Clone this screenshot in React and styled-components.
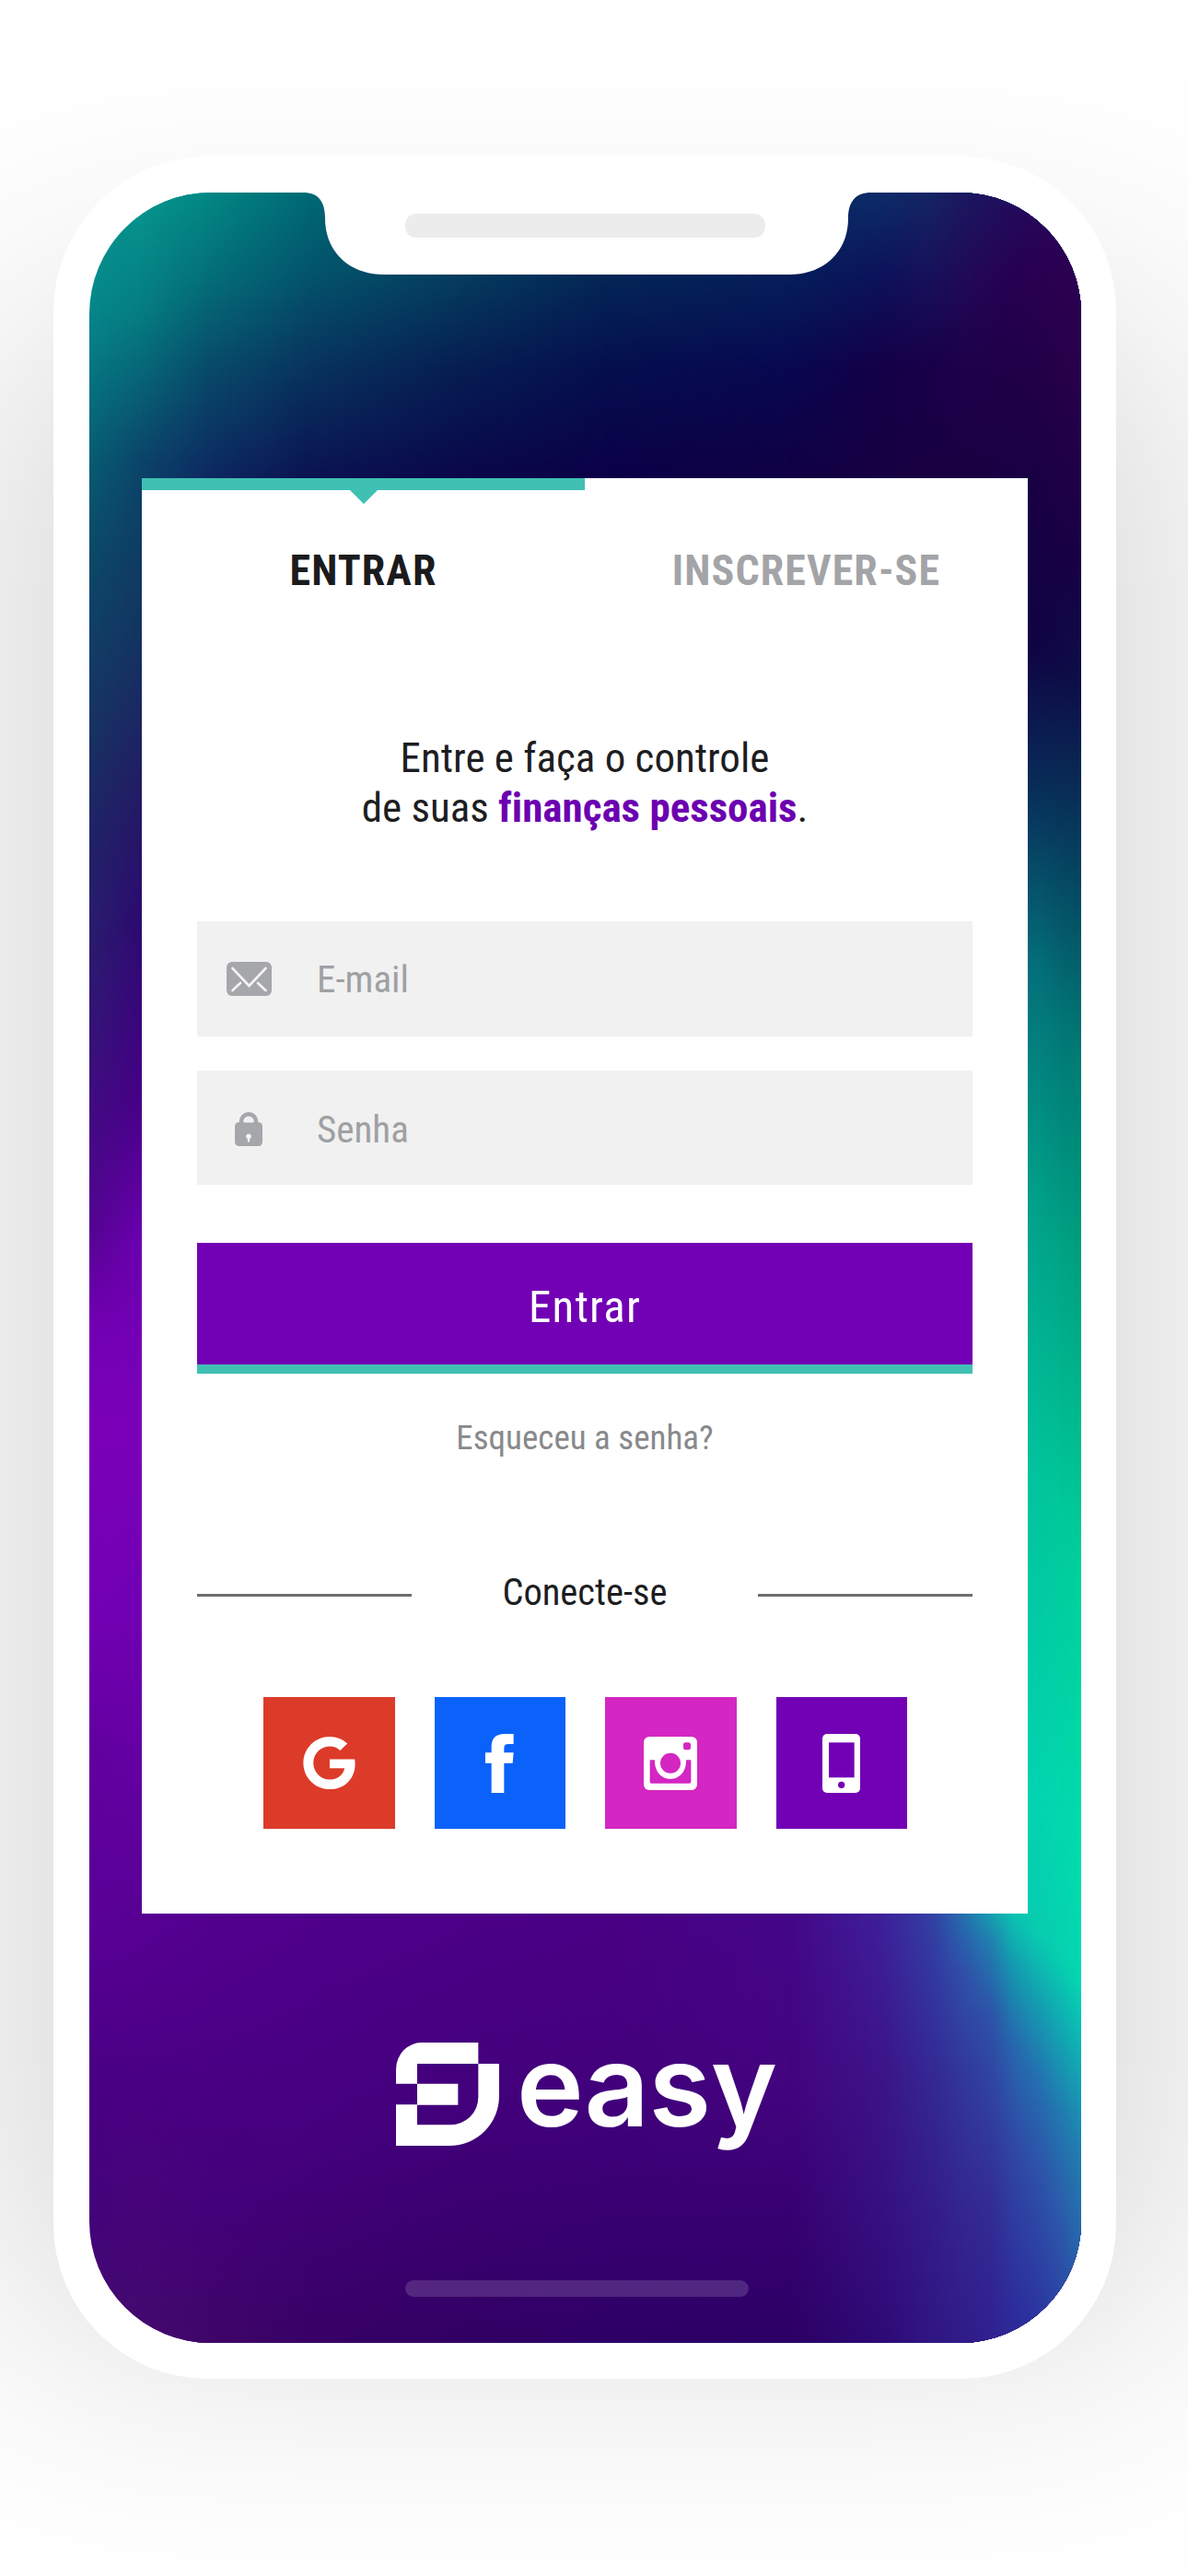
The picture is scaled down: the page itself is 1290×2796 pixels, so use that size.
import React from 'react';
import styled, { createGlobalStyle } from 'styled-components';
import { FaGoogle } from 'react-icons/fa';

const GlobalStyle = createGlobalStyle`
  * { box-sizing: border-box; }
  body { margin: 0; background: #fff; }
`;

const TEAL = '#3fc0b3';
const PURPLE = '#7200b4';

/* Vertical colour ramps of the backdrop: x, then [y, colour] stops, in screen pixels. */
const RAMPS = [
  [0, [[0, '#07968f'], [130, '#05878a'], [291, '#085c73'], [391, '#0b4a68'], [591, '#183262'], [691, '#202466'], [841, '#2d1a70'], [991, '#400c80'], [1120, '#520490'], [1230, '#7200b2'], [1341, '#7a00b8'], [1541, '#7300b4'], [1691, '#62009e'], [1868, '#5a0098'], [2041, '#4a0084'], [2191, '#43047a'], [2334, '#430a6e']]],
  [57, [[0, '#079690'], [130, '#057c80'], [291, '#0b4469'], [491, '#143261'], [641, '#221c64'], [791, '#2c0a70'], [991, '#470088'], [1141, '#6c00b0'], [1341, '#7a00b8'], [1541, '#7000b2'], [1868, '#580094'], [2041, '#4a0084'], [2334, '#430a6e']]],
  [125, [[0, '#038985'], [91, '#047079'], [191, '#084c6a'], [310, '#0d2a62'], [1868, '#530090'], [2041, '#4a0083'], [2191, '#43027a'], [2334, '#400668']]],
  [235, [[0, '#006a75'], [91, '#03546c'], [191, '#08345e'], [310, '#0b1352'], [1868, '#4f008c'], [2091, '#460080'], [2334, '#380266']]],
  [400, [[0, '#045068'], [91, '#053c5e'], [191, '#061e52'], [310, '#0a074a'], [1868, '#4c0088'], [2091, '#42007a'], [2334, '#320064']]],
  [560, [[0, '#053c60'], [91, '#042656'], [191, '#050f4e'], [310, '#0b0048'], [1868, '#4a0084'], [2091, '#40007a'], [2334, '#2e0066']]],
  [760, [[0, '#082c60'], [91, '#051e5a'], [191, '#080850'], [310, '#100044'], [1868, '#440688'], [2041, '#440480'], [2191, '#380072'], [2334, '#2c0064']]],
  [860, [[0, '#0c2c68'], [91, '#0c125a'], [191, '#140048'], [310, '#170042'], [1868, '#3e209a'], [2041, '#3c1488'], [2191, '#361080'], [2334, '#2e0a76']]],
  [915, [[0, '#162464'], [91, '#18105a'], [191, '#190049'], [310, '#190042'], [1868, '#3240a4'], [2041, '#342894'], [2191, '#341c8a'], [2334, '#301682']]],
  [950, [[0, '#1b1860'], [91, '#200a57'], [191, '#1e004a'], [310, '#1a0042'], [1800, '#18a8b0'], [1868, '#2470b0'], [1930, '#3050a8'], [2041, '#32389c'], [2191, '#342690'], [2334, '#301c8a']]],
  [980, [[0, '#1e125e'], [91, '#250454'], [191, '#1f0049'], [310, '#1a0043'], [1741, '#04d0b0'], [1840, '#0cbcb0'], [1900, '#2080b0'], [1980, '#2e52a8'], [2091, '#323c9e'], [2191, '#332c94'], [2334, '#302090']]],
  [1005, [[0, '#220c5c'], [91, '#270052'], [191, '#200048'], [310, '#1a0044'], [491, '#120044'], [641, '#082a58'], [841, '#056c78'], [1091, '#009c8a'], [1391, '#02c09e'], [1741, '#04d0b0'], [1860, '#08ccb0'], [1925, '#149cb0'], [2010, '#2668ae'], [2121, '#3048a4'], [2334, '#2c289a']]],
  [1030, [[0, '#26085a'], [91, '#290052'], [191, '#220049'], [310, '#1a0044'], [491, '#100444'], [641, '#082c58'], [841, '#04707a'], [1091, '#00a088'], [1391, '#01c49c'], [1741, '#03d4b0'], [1890, '#08ccb0'], [1960, '#14a0b0'], [2045, '#2470b0'], [2151, '#2e50a8'], [2334, '#2c309e']]],
  [1054, [[0, '#2c0459'], [91, '#2b0050'], [191, '#260049'], [391, '#180044'], [515, '#0e0a46'], [691, '#073a5c'], [891, '#027476'], [1141, '#00a284'], [1441, '#01ca9b'], [1771, '#02d8ae'], [1915, '#06d0b0'], [1995, '#12a6b2'], [2085, '#2278b0'], [2191, '#2c5aaa'], [2334, '#2b3ea2']]],
  [1077, [[0, '#300058'], [191, '#28004c'], [391, '#190044'], [541, '#0c1048'], [741, '#064460'], [941, '#007c74'], [1191, '#00a480'], [1491, '#00d09a'], [1791, '#02dcac'], [1941, '#04d8b0'], [2030, '#10acb4'], [2121, '#2180b0'], [2334, '#2a50a8']]],
];

const ramp = (stops) =>
  `linear-gradient(180deg, ${stops.map(([y, c]) => `${c} ${y}px`).join(', ')})`;

const Page = styled.main`
  width: 1290px;
  height: 2796px;
  overflow: hidden;
  padding: 170px 78px 0 58px;
  background: #fff;
  font-family: "Roboto Condensed", Roboto, "Liberation Sans", sans-serif;
  font-stretch: 75%;
  font-variant-ligatures: none;
`;

const Phone = styled.div`
  position: relative;
  width: 1154px;
  height: 2412px;
  padding: 39px 38px 39px 39px;
  &::before {
    content: '';
    position: absolute;
    inset: 180px -45px 59px;
    background: rgba(0, 0, 0, 0.165);
    filter: blur(150px);
  }
  &::after {
    content: '';
    position: absolute;
    inset: 0;
    border-radius: 168px;
    background: #fff;
  }
`;

const Screen = styled.div`
  position: relative;
  z-index: 1;
  height: 2334px;
  border-radius: 132px;
  overflow: hidden;
  display: flex;
  flex-direction: column;
  align-items: flex-start;
  padding: 310px 0 0 57px;
`;

const Ramp = styled.div`
  position: absolute;
  inset: 0;
  background: ${(p) => p.$fill};
  ${(p) => p.$to > 0 && `mask-image: linear-gradient(90deg, transparent ${p.$from}px, #000 ${p.$to}px);`}
`;

const Notch = styled.svg`
  position: absolute;
  top: -1px;
  left: 232px;
  width: 617px;
  height: 90px;
`;

const Speaker = styled.div`
  position: absolute;
  top: 23px;
  left: 343px;
  width: 391px;
  height: 26px;
  border-radius: 12px;
  background: #ececec;
`;

const Card = styled.section`
  position: relative;
  width: 962px;
  height: 1558px;
  background: #fff;
  display: flex;
  flex-direction: column;
`;

const Tabs = styled.nav`
  display: grid;
  grid-template-columns: 1fr 1fr;
`;

const Tab = styled.div`
  position: relative;
  border-top: 13px solid ${(p) => (p.$active ? TEAL : 'transparent')};
  padding-top: 57px;
  text-align: center;
  font-size: 46px;
  line-height: 60px;
  font-weight: 700;
  letter-spacing: 1.1px;
  color: ${(p) => (p.$active ? '#1b1b1d' : '#a3a4a7')};
  ${(p) => p.$active && `
    &::after {
      content: '';
      position: absolute;
      top: -1px;
      left: 50%;
      margin-left: -16px;
      border: 16px solid transparent;
      border-top-color: ${TEAL};
      border-bottom: 0;
    }
  `}
`;

const Form = styled.form`
  display: flex;
  flex-direction: column;
  padding: 0 60px;
`;

const Intro = styled.p`
  margin: 147px 0 97px;
  text-align: center;
  font-size: 45px;
  line-height: 53.5px;
  color: #1d1d1f;
`;

const Strong = styled.strong`
  font-weight: 700;
  color: #6c00b0;
`;

const Field = styled.label`
  display: flex;
  align-items: center;
  height: ${(p) => p.$height}px;
  margin-bottom: ${(p) => p.$gap}px;
  padding-top: ${(p) => p.$drop || 0}px;
  background: #f1f1f1;
  color: #9fa0a3;
  font-size: 41px;
`;

const FieldIcon = styled.span`
  width: 112px;
  margin-right: 18px;
  display: flex;
  justify-content: center;
`;

const Submit = styled.button`
  height: 142px;
  border: 0;
  border-bottom: 10px solid ${TEAL};
  padding: 6px 0 0;
  background: ${PURPLE};
  color: #fff;
  font: inherit;
  font-size: 49px;
  letter-spacing: 1.2px;
`;

const Forgot = styled.a`
  margin-top: 44.5px;
  text-align: center;
  font-size: 37px;
  line-height: 50px;
  color: #88898b;
`;

const Divider = styled.div`
  display: flex;
  align-items: center;
  justify-content: space-between;
  margin-top: 117.5px;
  font-size: 40.500px;
  line-height: 50px;
  font-weight: 450;
  color: #1d1d1f;
`;

const Rule = styled.span`
  width: 233px;
  height: 3px;
  margin-top: 7px;
  background: #6c6c6e;
`;

const Socials = styled.div`
  display: flex;
  justify-content: space-between;
  margin: 89px 71px 0 72px;
`;

const Tile = styled.button`
  width: 142.5px;
  height: 143px;
  border: 0;
  padding: 0;
  display: flex;
  align-items: center;
  justify-content: center;
  color: #fff;
  background: ${(p) => p.$color};
`;

const Brand = styled.div`
  position: relative;
  display: flex;
  align-items: flex-start;
  margin: 140px 0 0 276px;
  gap: 19px;
  color: #fff;
`;

const Wordmark = styled.span`
  margin-top: -3px;
  height: 100px;
  font-family: Inter, "DejaVu Sans", sans-serif;
  font-stretch: 100%;
  font-weight: 600;
  font-size: 123px;
  line-height: 100px;
  letter-spacing: -0.500px;
`;

const HomeBar = styled.div`
  position: absolute;
  bottom: 50px;
  left: 343px;
  width: 373px;
  height: 18px;
  border-radius: 9px;
  background: rgba(255, 255, 255, 0.15);
`;

const MailIcon = () => (
  <svg width="49" height="37" viewBox="0 0 49 37">
    <rect width="49" height="37" rx="6" fill="#a6a7aa" />
    <path d="M6.5 7 24.5 26 42.5 7M6.5 31l8.5-8M42.5 31l-8.5-8" fill="none" stroke="#f4f4f4" strokeWidth="2.6" strokeLinecap="round" />
  </svg>
);

const LockIcon = () => (
  <svg width="30" height="37" viewBox="0 0 30 37">
    <path d="M7 14V10a8 7.7 0 0 1 16 0V14" fill="none" stroke="#a6a7aa" strokeWidth="4.5" />
    <rect y="11" width="30" height="26" rx="4.5" fill="#a6a7aa" />
    <path d="M10.500 11.500V10a4.500 4.500 0 0 1 9 0v1.500z" fill="#f1f1f1" />
    <circle cx="15" cy="26.5" r="2.8" fill="#f4f4f4" />
    <path d="M15 27v5.500" stroke="#f4f4f4" strokeWidth="2.2" />
  </svg>
);

const FacebookIcon = () => (
  <svg width="31" height="64" viewBox="767 155 93 192" fill="currentColor">
    <path d="M787 347V250H767V216H787V197Q787 155 829 155H859V188H842Q828 188 828 201V216H859L856 250H828V347Z" />
  </svg>
);

const CameraIcon = () => (
  <svg width="58" height="58" viewBox="0 0 174 174">
    <rect width="174" height="174" rx="18" fill="currentColor" />
    <g fill="#d426c2">
      <rect x="129" y="19" width="24" height="24" rx="7" />
      <path d="M20 76H36C34 112 57 138 87 138S140 112 138 76H154V147Q154 152 149 152H25Q20 152 20 147Z" />
      <circle cx="87" cy="86" r="33" />
    </g>
  </svg>
);

const MobileIcon = () => (
  <svg width="41" height="64" viewBox="0 0 123 192">
    <rect width="123" height="192" rx="15" fill="currentColor" />
    <rect x="21" y="28" width="83" height="114" fill={PURPLE} />
    <circle cx="62" cy="166" r="11" fill={PURPLE} />
  </svg>
);

const BrandMark = () => (
  <svg width="112" height="112" viewBox="89 81 336 336" fill="currentColor">
    <path d="M89 215V168A84 87 0 0 1 176 81H357V150H158V215Z" />
    <path d="M158 215H291V284H158Z" />
    <path d="M89 283H158V349H266A90 90 0 0 0 357 258V150H425V255A162 162 0 0 1 263 417H89Z" />
  </svg>
);

const SOCIALS = [
  { name: 'Google', color: '#dc3b2a', icon: <FaGoogle size={59} /> },
  { name: 'Facebook', color: '#0a62fa', icon: <FacebookIcon /> },
  { name: 'Instagram', color: '#d426c2', icon: <CameraIcon /> },
  { name: 'Celular', color: PURPLE, icon: <MobileIcon /> },
];

export default function App() {
  return (
    <Page>
      <GlobalStyle />
      <Phone>
        <Screen>
          {RAMPS.map(([x, stops], i) => (
            <Ramp key={x} $fill={ramp(stops)} $from={i ? RAMPS[i - 1][0] : 0} $to={x} />
          ))}
          <Notch viewBox="0 -1 617 90" fill="#fff">
            <path d="M0 -1V0C17 0 24 10 24 28C24 64 50 89 88 89H528C566 89 592 64 592 28C592 10 600 0 617 0V-1Z" />
          </Notch>
          <Speaker />
          <Card>
            <Tabs>
              <Tab $active>ENTRAR</Tab>
              <Tab>INSCREVER-SE</Tab>
            </Tabs>
            <Form>
              <Intro>
                Entre e faça o controle
                <br />
                de suas <Strong>finanças pessoais</Strong>.
              </Intro>
              <Field $height={125} $gap={37}>
                <FieldIcon><MailIcon /></FieldIcon>
                E-mail
              </Field>
              <Field $height={124} $gap={63} $drop={3}>
                <FieldIcon><LockIcon /></FieldIcon>
                Senha
              </Field>
              <Submit type="button">Entrar</Submit>
              <Forgot>Esqueceu a senha?</Forgot>
              <Divider>
                <Rule />
                Conecte-se
                <Rule />
              </Divider>
              <Socials>
                {SOCIALS.map((s) => (
                  <Tile key={s.name} type="button" $color={s.color}>{s.icon}</Tile>
                ))}
              </Socials>
            </Form>
          </Card>
          <Brand>
            <BrandMark />
            <Wordmark>easy</Wordmark>
          </Brand>
          <HomeBar />
        </Screen>
      </Phone>
    </Page>
  );
}
